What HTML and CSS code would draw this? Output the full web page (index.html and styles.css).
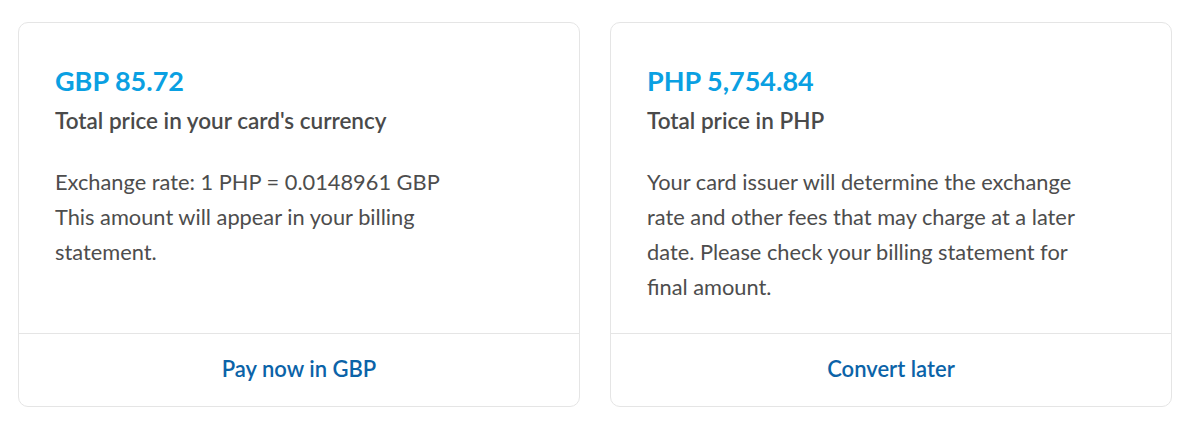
FILE: index.html
```html
<!DOCTYPE html>
<html lang="en">
<head>
<meta charset="utf-8">
<title>Currency options</title>
<link rel="stylesheet" href="styles.css">
</head>
<body>
<div class="options">
  <div class="card">
    <div class="card-body">
      <div class="price">GBP 85.72</div>
      <div class="title">Total price in your card's currency</div>
      <p class="desc">Exchange rate: 1 PHP = 0.0148961 GBP<br>This amount will appear in your billing statement.</p>
    </div>
    <div class="card-footer"><span class="action">Pay now in GBP</span></div>
  </div>
  <div class="card">
    <div class="card-body">
      <div class="price">PHP 5,754.84</div>
      <div class="title">Total price in PHP</div>
      <p class="desc">Your card issuer will determine the exchange rate and other fees that may charge at a later date. Please check your billing statement for final amount.</p>
    </div>
    <div class="card-footer"><span class="action">Convert later</span></div>
  </div>
</div>
</body>
</html>
```

FILE: styles.css
```css
html, body {
  margin: 0;
  padding: 0;
  background: #ffffff;
}

body {
  font-family: Lato, "Open Sans", sans-serif;
  color: #4a4a4a;
}

.options {
  display: flex;
  gap: 30px;
  padding: 22px 20px 0 18px;
}

.card {
  flex: 1 1 0;
  height: 385px;
  box-sizing: border-box;
  border: 1px solid #e5e5e5;
  border-radius: 10px;
  display: flex;
  flex-direction: column;
}

.card-body {
  flex: 1 1 auto;
  padding: 41px 36px 0 36px;
}

.price {
  font-size: 27px;
  line-height: 34px;
  font-weight: 700;
  color: #0aa0e2;
}

.title {
  margin-top: 8px;
  font-size: 22.5px;
  line-height: 30px;
  font-weight: 600;
  color: #4a4a4a;
}

.desc {
  margin: 28px 0 0 0;
  font-size: 21.8px;
  line-height: 35px;
  color: #4d4d4d;
  max-width: 440px;
}

.card-footer {
  height: 73px;
  box-sizing: border-box;
  padding-bottom: 4px;
  border-top: 1px solid #e5e5e5;
  display: flex;
  align-items: center;
  justify-content: center;
}

.action {
  font-size: 22px;
  font-weight: 600;
  color: #0b63a8;
}
```
